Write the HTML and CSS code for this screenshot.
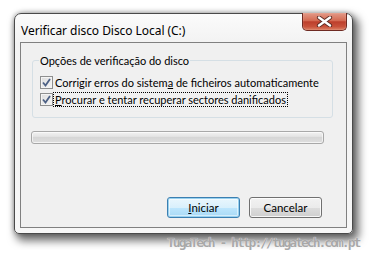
FILE: index.html
```html
<!DOCTYPE html>
<html>
<head>
<meta charset="utf-8">
<link rel="stylesheet" href="styles.css">
</head>
<body>
<div class="page">
  <div class="window">
    <div class="titlebar">
      <span class="title">Verificar disco Disco Local (C:)</span>
      <div class="close">
        <svg width="17" height="11" viewBox="0 0 17 11">
          <path d="M3 1.5 L14 9.5 M14 1.5 L3 9.5" stroke="#5a2a22" stroke-width="4.2" stroke-linecap="round"/>
          <path d="M3 1.5 L14 9.5 M14 1.5 L3 9.5" stroke="#ffffff" stroke-width="2.4" stroke-linecap="round"/>
        </svg>
      </div>
    </div>
    <div class="client">
      <fieldset class="group">
        <legend class="legend">Opções de verificação do disco</legend>
        <label class="row">
          <span class="check"><svg width="9" height="9" viewBox="0 0 9 9"><path d="M1 4.5 L3.5 7.5 L8 1" fill="none" stroke="#4d6185" stroke-width="1.8"/></svg></span>
          <span class="label">Corrigir erros do sistem<u>a</u> de ficheiros automaticamente</span>
        </label>
        <label class="row">
          <span class="check"><svg width="9" height="9" viewBox="0 0 9 9"><path d="M1 4.5 L3.5 7.5 L8 1" fill="none" stroke="#4d6185" stroke-width="1.8"/></svg></span>
          <span class="label focus"><u>P</u>rocurar e tentar recuperar sectores danificados</span>
        </label>
      </fieldset>
      <div class="progress"></div>
      <div class="buttons">
        <button class="btn default"><u>I</u>niciar</button>
        <button class="btn">Cancelar</button>
      </div>
    </div>
  </div>
  <div class="watermark">TugaTech - http://tugatech.com.pt</div>
</div>
</body>
</html>
```
FILE: styles.css
```css
html, body {
  margin: 0;
  padding: 0;
  background: #ffffff;
}
.page {
  padding: 13px 0 0 14px;
  width: 358px;
  font-family: Lato, "Noto Sans", sans-serif;
  font-size: 11px;
  color: #000;
}
.window {
  box-sizing: border-box;
  width: 339px;
  height: 221px;
  border: 1px solid #4a4a4a;
  border-radius: 7px 7px 5px 5px;
  background: linear-gradient(#fbfbfb, #f2f2f2 30px, #f7f7f7);
  box-shadow: 4px 5px 9px 2px rgba(0,0,0,0.55), 0 0 5px rgba(0,0,0,0.35);
  display: flex;
  flex-direction: column;
}
.titlebar {
  height: 28px;
  display: flex;
  align-items: flex-start;
  justify-content: space-between;
  padding-left: 6px;
  padding-right: 5px;
}
.title {
  margin-top: 8px;
  font-family: "Noto Sans", "Open Sans", sans-serif;
  font-size: 12px;
  letter-spacing: -0.05px;
}
.close {
  box-sizing: border-box;
  width: 45px;
  height: 18px;
  margin-top: -1px;
  border: 1px solid #6e2a22;
  border-top: none;
  border-radius: 0 0 5px 5px;
  background: linear-gradient(#e39a88, #d46a52 45%, #bd3f2c 52%, #c9523b 80%, #dc8266);
  display: flex;
  align-items: center;
  justify-content: center;
  box-shadow: inset 0 0 1px rgba(255,255,255,0.8);
}
.client {
  flex: 1;
  margin: 0 5px 5px 5px;
  border: 1px solid #808080;
  background: #f0f0f0;
  display: flex;
  flex-direction: column;
  padding: 11px 0 0 11px;
}
.group {
  margin: 0;
  width: 301px;
  box-sizing: border-box;
  height: 64px;
  border: 1px solid #d5dfe5;
  border-radius: 3px;
  padding: 7px 0 0 7px;
}
.legend {
  padding: 0 1px;
  margin-left: -1px;
  font-size: 11px;
}
.row {
  display: flex;
  align-items: center;
  height: 17px;
  white-space: nowrap;
}
.check {
  flex: none;
  box-sizing: border-box;
  width: 13px;
  height: 13px;
  border: 1px solid #8e8f8f;
  background: linear-gradient(135deg, #dcdcdc, #f6f6f6);
  box-shadow: inset 0 0 0 1px #f4f4f4;
  display: flex;
  align-items: center;
  justify-content: center;
  margin-right: 1px;
}
.label {
  padding: 0 1px;
  line-height: 13px;
  font-size: 11px;
}
.label u {
  text-decoration: underline;
}
.focus {
  outline: 1px dotted #000;
  outline-offset: 0;
}
.progress {
  box-sizing: border-box;
  width: 293px;
  height: 13px;
  margin-top: 13px;
  margin-left: -1px;
  border: 1px solid #a8a8a8;
  border-radius: 3px;
  background: linear-gradient(#f2f2f2, #e4e4e4 40%, #d6d6d6 50%, #dddddd 90%, #e8e8e8);
  box-shadow: inset 0 0 0 1px rgba(255,255,255,0.6);
}
.buttons {
  display: flex;
  justify-content: flex-end;
  gap: 9px;
  margin-top: auto;
  margin-bottom: 9px;
  padding-right: 24px;
}
.btn {
  box-sizing: border-box;
  width: 73px;
  height: 21px;
  border: 1px solid #707070;
  border-radius: 3px;
  background: linear-gradient(#f2f2f2, #ebebeb 50%, #dddddd 51%, #cfcfcf);
  box-shadow: inset 0 0 0 1px rgba(255,255,255,0.8);
  font-family: Lato, "Noto Sans", sans-serif;
  font-size: 11.5px;
  color: #000;
  padding: 0;
  line-height: 17px;
}
.btn.default {
  border-color: #3c7fb1;
  background: linear-gradient(#eaf6fd, #d9f0fc 50%, #bee6fd 51%, #a7d9f5);
  box-shadow: inset 0 0 0 1px #98d1ef, inset 0 0 0 2px rgba(255,255,255,0.5);
}
.watermark {
  margin: 1px 0 0 153px;
  font-family: "DejaVu Sans Mono", monospace;
  font-weight: bold;
  font-size: 13px;
  color: #a8a8a8;
  letter-spacing: -2px;
  white-space: nowrap;
  text-shadow: 0 0 1px #fff;
}
```
